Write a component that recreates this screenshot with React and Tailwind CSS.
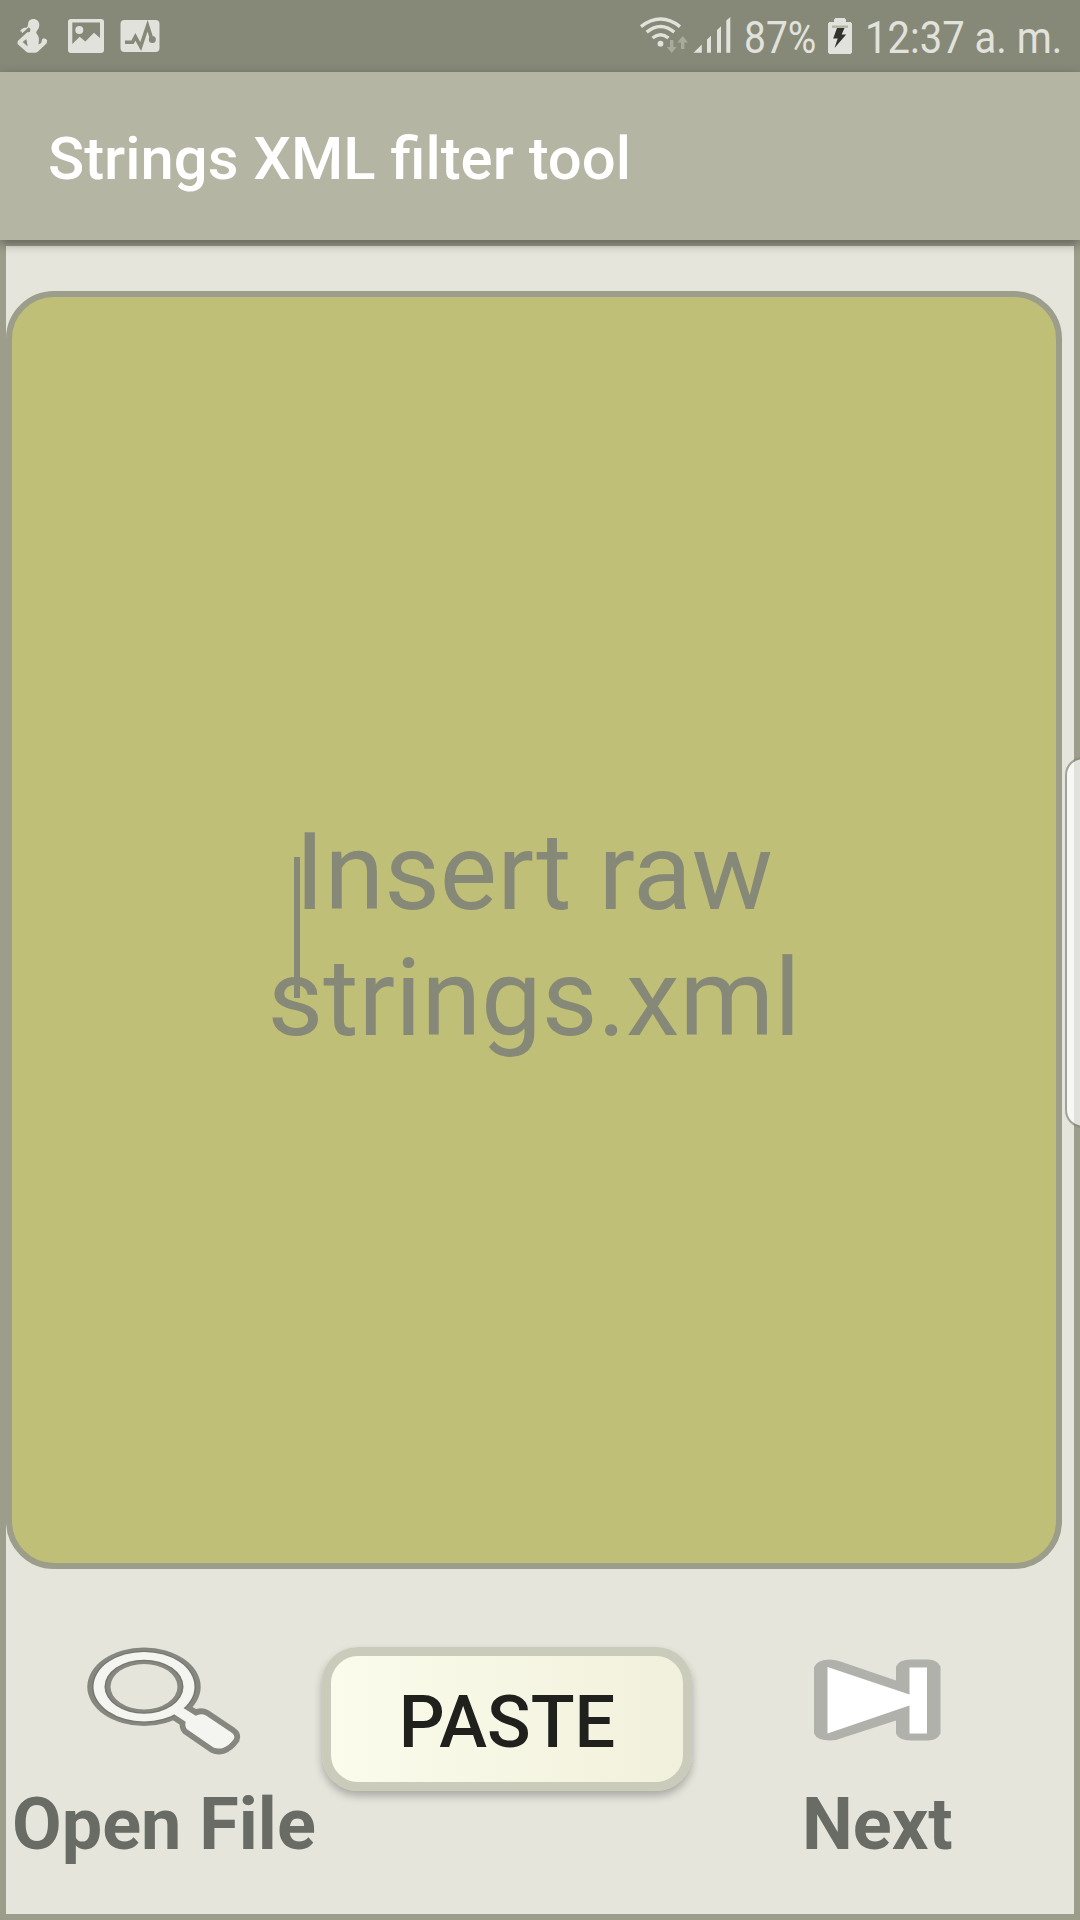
function StatusBar() {
  return (
    <header className="flex h-[72px] shrink-0 items-start bg-[#868878] text-[#e1e2dc]">
      <svg className="h-[72px] w-[170px] shrink-0" viewBox="0 0 170 72" fill="currentColor">
        <path d="M28.3 22.5c.6-2.200 2.500-3.500 5-3.500 3.600 0 6 2.600 6 6 0 2.500-1.200 4.600-2.600 6l-.5 2c1.900 2.200 3 4.600 2.700 7.200l-.5 4.400 2.800-1.500.8-3.400c.5-1.300 1.500-1.300 4-.8l1.200 1.600-.7 3-9 8.500c-2.800 1.100-8 1.100-10.600.2L17.500 44l.2-3 9-8.300c1-.8 2.300-.5 3.300-1l.4-2.700-1.700-1.700-6.200 5.700c-.8-.3-.9-.8-.6-1.500l-2-.3c1.300-2.200 3.600-3.600 7-3.700 1-1.200 1.200-3 1.400-5zM22.700 42l5 4.500-1.300-7.500z" fillRule="evenodd" />
        <path fillRule="evenodd" d="M71 19h30a3 3 0 0 1 3 3v28a3 3 0 0 1-3 3H71a3 3 0 0 1-3-3V22a3 3 0 0 1 3-3zm1.300 3.600V44l7.400-7.300 5.600 4.800 8.700-8.800 6 5.300V22.600z" />
        <circle cx="79.300" cy="30" r="4" />
        <rect x="120.500" y="20" width="39" height="32" rx="4" />
        <path d="M125 42.200h7.600l2.800-5.400 5.300 9.800 6.900-20.800 4.400 14" fill="none" stroke="#868878" strokeWidth="3.600" />
        <circle cx="152.300" cy="39.500" r="3.500" fill="#868878" />
      </svg>
      <svg className="ml-[468px] h-[72px] w-[94px] shrink-0" viewBox="638 0 94 72" fill="none">
        <g stroke="#e1e2dc" strokeWidth="3.500">
          <path d="M641 26.600Q660.500 11.500 680 26.600" />
          <path d="M646.700 32.200Q660.500 20.700 674.300 32.200" />
          <path d="M652.500 38Q660.500 31.500 668.500 38" />
        </g>
        <circle cx="660.500" cy="43.700" r="2.900" fill="#e1e2dc" />
        <path d="M670 40h3.400v7h3.200l-4.900 6-4.900-6h3.200zM681 49h3.400v-6.500h3.600l-5.300-6.500-5.300 6.500h3.600z" fill="#aaaa9b" />
        <path d="M693.500 52.700l8.300-8.200v8.200zM707 52.700V39.500l4-3.700v16.900zM717 52.700V30l4-3.700v26.400zM726.300 52.700V20.500l4-3.500v35.700z" fill="#e1e2dc" />
      </svg>
      <span className="ml-[11.500px] mt-[10.500px] w-[85px] origin-left scale-x-[0.865] whitespace-nowrap text-[45px] leading-[53px]">87%</span>
      <svg className="h-[72px] w-[26px] shrink-0" viewBox="827 0 26 72">
        <path d="M834 22v-2.500l1.500-1.500h9l1.500 1.500V22h4.500l1.500 1.500v29l-1.500 1.500h-21l-1.500-1.500v-29l1.500-1.500z" fill="#e1e2dc" />
        <path d="M832 25.500h16v2.300h-16z" fill="#b1b2a6" />
        <path d="M837 28h7.500l-2.800 6.500h4.500L834.500 48l3.200-9.500h-4.500z" fill="#32332e" />
      </svg>
      <span className="ml-[11.500px] mt-[10.500px] origin-left scale-x-[0.889] whitespace-nowrap text-[45px] leading-[53px]">12:37 a. m.</span>
    </header>
  );
}

function MagnifierIcon() {
  const handle =
    "M181 1706.500L195.700 1715.700Q201 1712.700 206 1715.500L231 1732.300Q235.500 1735.500 234 1738.800Q229 1746 223 1747.900Q218 1749.500 213.500 1747.500L187 1729.300Q184.500 1726 185.700 1721.700L173 1713.500z";
  return (
    <svg className="h-[110px] w-[160px]" viewBox="84 1646 160 110" fill="none">
      <path d={handle} fill="#868880" stroke="#868880" strokeWidth="11.500" strokeLinejoin="round" />
      <ellipse cx="144" cy="1686.700" rx="56.700" ry="39.300" fill="#868880" />
      <ellipse cx="144" cy="1686.700" rx="52" ry="36" fill="#747670" />
      <ellipse cx="144" cy="1686.700" rx="50.500" ry="34.800" fill="#f4f5f0" />
      <path d={handle} fill="#f4f5f0" />
      <ellipse cx="144" cy="1686.700" rx="39.500" ry="27" fill="#747670" />
      <ellipse cx="144" cy="1686.700" rx="38" ry="25.800" fill="#868880" />
      <ellipse cx="144" cy="1686.700" rx="33.500" ry="22.800" fill="#e5e5dc" />
    </svg>
  );
}

function NextIcon() {
  return (
    <svg className="h-[84px] w-[130px]" viewBox="812 1658.600 130 84">
      <path d="M814 1667q3-8 16-8 6 0 12 2.500l54 18.500v-14q3-7 15-7h17q9 0 12.500 7v67q-3.500 7-12.500 7h-17q-12 0-15-7v-13l-54 17.500q-6 2.500-12 2.500-13 0-16-7z" fill="#b0b1aa" />
      <path d="M827.500 1666.500l82 27.500v-27h17.500v66h-17.500v-28l-82 28z" fill="#fff" />
    </svg>
  );
}

export default function App() {
  return (
    <div className="relative flex h-[1920px] w-[1080px] flex-col overflow-hidden bg-[#e5e5dc] font-['Roboto',sans-serif]">
      <StatusBar />
      <div className="z-10 flex h-[168px] shrink-0 items-center bg-[#b4b5a3] pl-12 pt-[5px] shadow-[0_4px_10px_rgba(0,0,0,0.38)]">
        <h1 className="text-[59.800px] font-medium leading-[70px] text-white">Strings XML filter tool</h1>
      </div>
      <main className="flex grow flex-col border-[6px] border-[#9c9d8b] pt-[45px]">
        <section className="flex h-[1278px] w-[1056px] shrink-0 items-center justify-center rounded-[48px] border-[6px] border-[#9c9d8b] bg-[#bfbf77] pt-[10px]">
          <div className="relative text-center text-[108px] leading-[126px] text-[#868878]">
            <p>Insert raw</p>
            <p>strings.xml</p>
            <span className="absolute left-[26px] top-[48px] h-[141px] w-[6px] bg-[#868878]" />
          </div>
        </section>
        <nav className="flex items-start pt-[76px] font-bold text-[#696b65]">
          <div className="flex w-[316px] flex-col items-start pl-[6px] pt-px">
            <div className="pl-[72px]"><MagnifierIcon /></div>
            <span className="mt-[27px] whitespace-nowrap text-[72px] leading-[84px]">Open File</span>
          </div>
          <button className="mt-[2px] h-[144px] w-[370px] rounded-[36px] border-[9px] border-[#cacbba] bg-[linear-gradient(90deg,#fbfcec,#f1f0dc)] bg-origin-border pt-[7px] text-[72px] font-medium leading-[84px] text-[#20211d] shadow-[0_5px_9px_rgba(0,0,0,0.26)]">PASTE</button>
          <div className="ml-[110px] flex flex-col items-start pt-[14px]">
            <div className="pl-[10px]"><NextIcon /></div>
            <span className="mt-[40px] text-[72px] leading-[84px]">Next</span>
          </div>
        </nav>
      </main>
      <aside className="absolute left-[1065px] top-[757px] z-20 h-[371px] w-[40px] rounded-[18px] border-2 border-[#868878]/70 bg-white/70 bg-clip-padding" />
    </div>
  );
}
